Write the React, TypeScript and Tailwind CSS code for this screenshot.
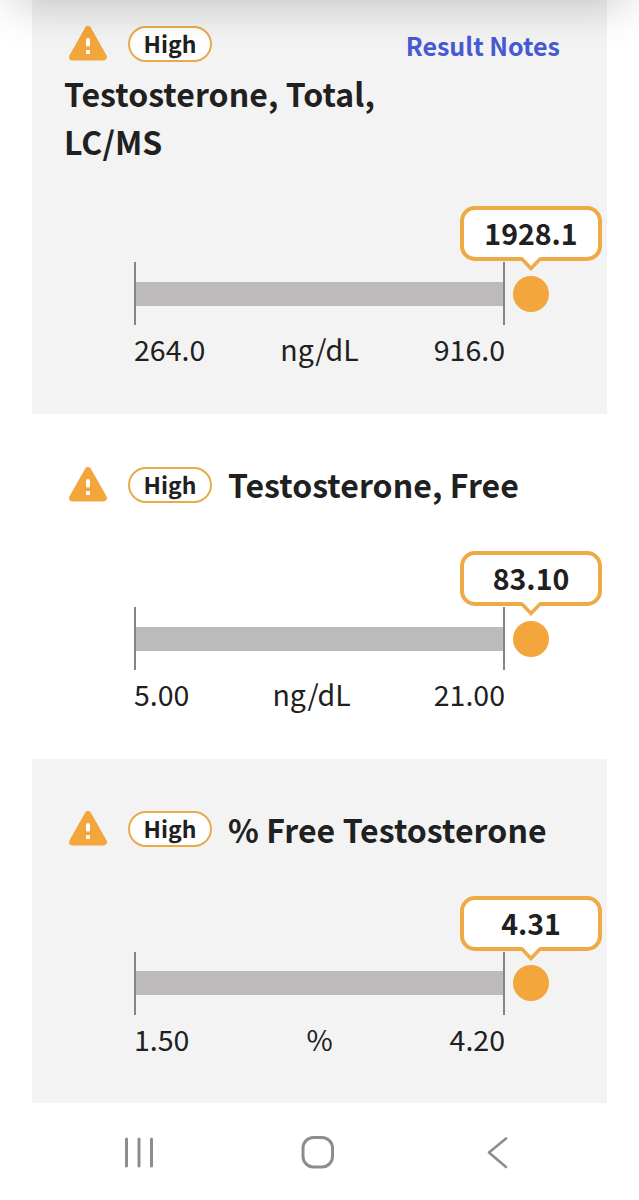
const results = [
  {
    name: "Testosterone, Total, LC/MS",
    value: "1928.1",
    low: "264.0",
    high: "916.0",
    unit: "ng/dL",
    notes: true,
    className: "h-[413.5px] bg-[#f3f3f3] pt-[26px]",
  },
  {
    name: "Testosterone, Free",
    value: "83.10",
    low: "5.00",
    high: "21.00",
    unit: "ng/dL",
    notes: false,
    className: "h-[345px] bg-white pt-[53px]",
  },
  {
    name: "% Free Testosterone",
    value: "4.31",
    low: "1.50",
    high: "4.20",
    unit: "%",
    notes: false,
    className: "h-[344.5px] bg-[#f3f3f3] pt-[52.5px]",
  },
];

type Result = (typeof results)[number];

function WarningIcon() {
  return (
    <svg width="40" height="36" viewBox="0 0 40 36" className="shrink-0">
      <path
        d="M20 3.6 35.4 30.9H4.6Z"
        fill="#f2a63b"
        stroke="#f2a63b"
        strokeWidth="7"
        strokeLinejoin="round"
      />
      <path d="M20 14v4.7" stroke="#fff" strokeWidth="4" strokeLinecap="round" />
      <rect x="18" y="24" width="4" height="4" rx="0.6" fill="#fff" />
    </svg>
  );
}

function StatusBadge() {
  return (
    <span className="flex h-9 w-[84px] shrink-0 items-center justify-center rounded-full border-2 border-[#e8ab4c] bg-white pb-px text-[23px] leading-none font-bold">
      High
    </span>
  );
}

function RangeGauge({ result }: { result: Result }) {
  return (
    <div className="relative mt-auto ml-[102px] h-[207.5px] w-[371px] shrink-0 pt-14">
      <div className="flex h-[63px] items-center border-x-2 border-[#858585]">
        <div className="h-6 w-full bg-[#bcbabb]" />
      </div>

      <div className="mt-[3px] flex items-center justify-between text-[28.5px] leading-[42px]">
        <span>{result.low}</span>
        <span>{result.unit}</span>
        <span>{result.high}</span>
      </div>

      <div className="absolute top-0 left-[326px] flex w-[142px] flex-col items-center">
        <div className="flex h-[55px] w-full items-center justify-center rounded-[15px] border-4 border-[#eeaa45] bg-white text-[28.5px] leading-none font-bold">
          {result.value}
        </div>
        <svg width="24" height="14" viewBox="0 0 24 14" className="-mt-1">
          <path d="M2 0H22L12 11Z" fill="#fff" />
          <path d="M1 2H3L12 11.5 21 2H23" fill="none" stroke="#eeaa45" strokeWidth="3.5" />
        </svg>
        <div className="mt-[4.5px] size-9 rounded-full bg-[#f2a63b]" />
      </div>
    </div>
  );
}

function ResultCard({ result }: { result: Result }) {
  return (
    <section className={`mx-8 flex flex-col ${result.className}`}>
      <div className="flex h-9 items-center pl-9">
        <WarningIcon />
        <div className="ml-5">
          <StatusBadge />
        </div>
        {result.notes ? (
          <a
            href="#notes"
            className="mt-0.5 mr-[47px] ml-auto text-[25px] leading-none font-bold text-[#465ad2]"
          >
            Result Notes
          </a>
        ) : (
          <h2 className="-mt-px ml-4 text-[32px] leading-[48px] font-bold tracking-[0.08px] whitespace-nowrap">
            {result.name}
          </h2>
        )}
      </div>
      {result.notes && (
        <h2 className="mt-[7px] ml-8 w-[340px] text-[32px] leading-[48px] font-bold tracking-[0.08px]">
          {result.name}
        </h2>
      )}
      <RangeGauge result={result} />
    </section>
  );
}

function NavBar() {
  return (
    <nav className="flex h-[97px] items-center justify-between px-[122px] text-[#8d8d8d]">
      <svg width="34" height="34" viewBox="0 0 34 34" fill="none" stroke="currentColor" strokeWidth="3" strokeLinecap="round">
        <path d="M4.5 4v27M17 4v27M29.5 4v27" />
      </svg>
      <svg width="34" height="34" viewBox="0 0 34 34" fill="none" stroke="currentColor" strokeWidth="3" className="mr-1">
        <rect x="2" y="2.5" width="29.5" height="29.5" rx="10.5" />
      </svg>
      <svg width="34" height="34" viewBox="0 0 34 34" fill="none" stroke="currentColor" strokeWidth="2.6" strokeLinecap="round" strokeLinejoin="round">
        <path d="M23 3.5 6 17.5l17 14.5" />
      </svg>
    </nav>
  );
}

export default function App() {
  return (
    <div className="relative h-[1200px] w-[639px] overflow-hidden bg-white font-['Noto_Sans_CJK_SC',sans-serif] text-[#202020]">
      {/* shadow of the sticky header above */}
      <div className="absolute -top-10 right-4 left-4 h-10 shadow-[0_0_45px_4px_rgba(0,0,0,0.22)]" />
      {results.map((result) => (
        <ResultCard key={result.name} result={result} />
      ))}
      <NavBar />
    </div>
  );
}
